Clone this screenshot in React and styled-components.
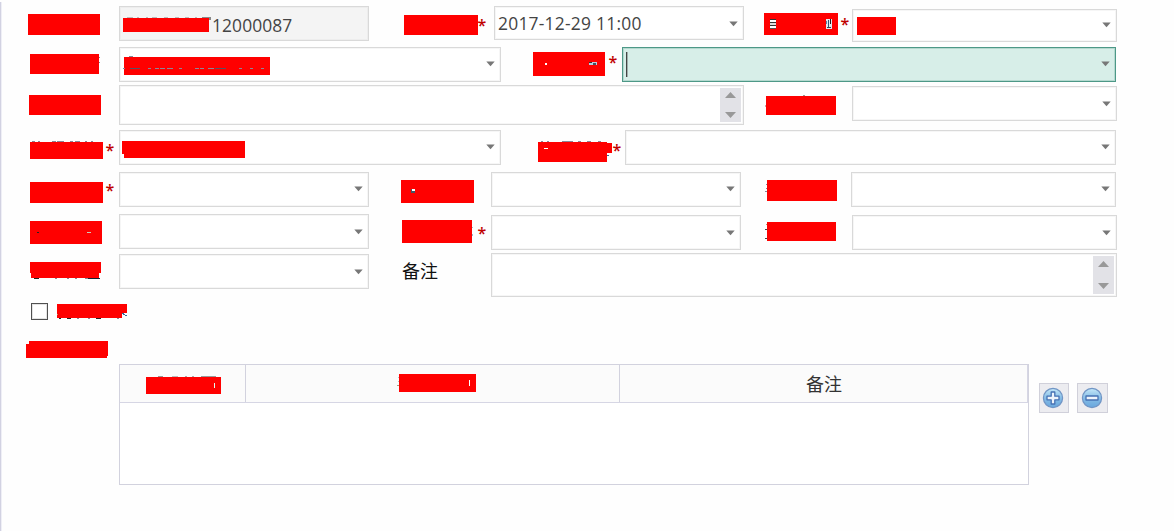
import React from 'react';
import styled, { createGlobalStyle } from 'styled-components';

const GlobalStyle = createGlobalStyle`
  * {
    box-sizing: border-box;
  }
  body {
    margin: 0;
    background: #fefefe;
    overflow: hidden;
  }
`;

const Page = styled.div`
  width: 1174px;
  height: 531px;
  display: flex;
  background: #fefefe;
  font-family: "Open Sans", "Noto Sans CJK SC", sans-serif;
  font-size: 17.4px;
  color: #444;
`;

const Edge = styled.div`
  width: 2px;
  margin-top: 2px;
  background: #d2d2e2;
  border-right: 1px solid #efeff6;
`;

const Form = styled.div`
  flex: 1;
  display: flex;
  flex-direction: column;
  margin-left: -2px;
`;

const Row = styled.div`
  display: flex;
  align-items: flex-start;
  flex: none;
  height: ${p => p.$h}px;
`;

const Cell = styled.div`
  flex: none;
  display: flex;
  margin-left: ${p => p.$gap || 0}px;
  margin-top: ${p => p.$top || 0}px;
`;

const Box = styled(Cell)`
  width: ${p => p.$w}px;
  height: ${p => p.$h}px;
  background: ${p => (p.$readOnly ? '#f4f4f4' : '#fff')};
  border: 1px solid #d9d9d9;
  box-shadow: inset 0 0 0 1px ${p => (p.$readOnly ? '#ededed' : '#f6f6f6')};
  justify-content: space-between;
  align-items: flex-start;

  ${p => p.$focus && `
    background: #d7eee8;
    border-color: #4d9887;
    box-shadow: inset 0 0 0 1px #b4d9cf;
  `}
`;

const Value = styled.div`
  display: flex;
  align-items: flex-start;
  height: 100%;
  padding-left: 3px;
  white-space: nowrap;
`;

const Digits = styled.span`
  margin-left: ${p => p.$left || 0}px;
  margin-top: ${p => p.$top || 0}px;
  line-height: 24px;
  letter-spacing: ${p => p.$spacing || 0}px;
`;

const Caret = styled.div`
  width: 1px;
  height: 25px;
  margin-top: 4px;
  background: #444;
  box-shadow: 1px 0 0 #9fb0ab;
`;

const Star = styled.span`
  width: 8px;
  height: 12px;
  margin-left: ${p => p.$gap || 0}px;
  margin-top: ${p => p.$top || 0}px;
  font-size: 16px;
  font-weight: 600;
  line-height: 18px;
  text-indent: -0.5px;
  color: #c00000;
`;

const Label = styled.div`
  margin-left: ${p => p.$gap || 0}px;
  margin-top: ${p => p.$top || 0}px;
  font-family: "Noto Sans CJK SC", sans-serif;
  font-size: 18px;
  line-height: 24px;
  color: ${p => p.$color || '#111'};
`;

const MaskSvg = styled.svg`
  display: block;
  flex: none;
  overflow: visible;
  margin-left: ${p => p.$gap || 0}px;
  margin-top: ${p => p.$top || 0}px;
`;

const ArrowSvg = styled.svg`
  display: block;
  flex: none;
  margin-top: ${p => p.$top}px;
  margin-right: ${p => p.$right}px;
`;

const Scroll = styled.div`
  width: 21px;
  align-self: stretch;
  margin: 2px 2px 2px 0;
  padding: ${p => p.$pad}px 0;
  display: flex;
  flex-direction: column;
  align-items: center;
  justify-content: space-between;
  background: #e2e2e7;
`;

const Checkbox = styled.div`
  width: 17px;
  height: 17px;
  margin: 5px 0 0 31px;
  background: #fff;
  border: 1px solid #505050;
  box-shadow: inset 0 0 0 1px #e4e4e4;
`;

const Table = styled.div`
  width: 910px;
  height: 121px;
  margin-left: 119px;
  border: 1px solid #d2d2de;
  background: #fff;
`;

const Head = styled.div`
  display: flex;
  height: 38px;
  background: #fbfbfb;
  border-bottom: 1px solid #d6d6e4;
`;

const HeadCell = styled.div`
  display: flex;
  align-items: flex-start;
  flex: ${p => (p.$w ? `0 0 ${p.$w}px` : 1)};
  border-right: 1px solid #d2d2de;

  &:last-child {
    border-right-color: #d6d6e4;
  }
`;

const IconButton = styled.button`
  width: ${p => p.$w || 30}px;
  height: 30px;
  margin: 19px 0 0 ${p => p.$gap}px;
  padding: 0 2px 0 0;
  display: flex;
  align-items: center;
  justify-content: center;
  background: #ececf0;
  border: 1px solid #d0d0da;
`;

// w/h is the solid block, d replaces it when the outline is uneven
function Mask({ w, h, gap, top, d, children }) {
  return (
    <MaskSvg width={w} height={h} $gap={gap} $top={top} shapeRendering="crispEdges">
      <path d={d || `M0 0H${w}V${h}H0Z`} fill="#f00" />
      {children}
    </MaskSvg>
  );
}

// [x, y, w, h, color]
function Specks({ items }) {
  return items.map(([x, y, w, h, c], i) => (
    <rect key={i} x={x} y={y} width={w} height={h} fill={c || '#889'} />
  ));
}

function Arrow({ top = 13, right = 5 }) {
  return (
    <ArrowSvg width="9" height="6" $top={top} $right={right}>
      <path d="M0.3 0.5H8.7L4.5 5.3Z" fill="#777" />
    </ArrowSvg>
  );
}

function Select({ w, h = 35, gap, top, arrow, right, focus, children }) {
  return (
    <Box $w={w} $h={h} $gap={gap} $top={top} $focus={focus}>
      <Value>{children}</Value>
      <Arrow top={arrow} right={right} />
    </Box>
  );
}

function TextArea({ w, h, gap, top, pad = 4 }) {
  return (
    <Box $w={w} $h={h} $gap={gap} $top={top}>
      <Value />
      <Scroll $pad={pad}>
        <svg width="11" height="6"><path d="M0 6L5.5 0L11 6Z" fill="#999" /></svg>
        <svg width="11" height="6"><path d="M0 0H11L5.5 6Z" fill="#999" /></svg>
      </Scroll>
    </Box>
  );
}

function RoundIcon({ minus }) {
  const id = minus ? 'minusFill' : 'plusFill';
  return (
    <svg width="22" height="22" viewBox="0 0 22 22">
      <defs>
        <linearGradient id={id} x1="0" y1="0" x2="0" y2="1">
          <stop offset="0" stopColor="#c4e8f8" />
          <stop offset="0.5" stopColor="#86bde6" />
          <stop offset="1" stopColor="#67a6dd" />
        </linearGradient>
      </defs>
      <circle cx="11" cy="11" r="9.6" fill={`url(#${id})`} stroke="#7195c5" strokeWidth="1.2" />
      <path
        d={minus
          ? 'M5 9H17V13H5Z'
          : 'M9.2 5H12.8V9.2H17V12.8H12.8V17H9.2V12.8H5V9.2H9.2Z'}
        fill="#eef4fb"
        stroke="#4672b4"
        strokeWidth="1.3"
        strokeLinejoin="round"
      />
    </svg>
  );
}

function App() {
  return (
    <Page>
      <GlobalStyle />
      <Edge />
      <Form>
        <Row $h={44}>
          <Mask w={72} h={21} gap={28} top={14} />
          <Box $w={250} $h={35} $gap={19} $top={6} $readOnly>
            <Value>
              <Mask w={86} h={14} top={11}>
                <Specks items={[[4, -1, 6, 1, '#bbb'], [14, -1, 2, 1, '#bbb'], [23, -1, 2, 1, '#bbb'], [29, -1, 5, 1, '#bbb'], [41, -1, 4, 1, '#bbb'], [52, -1, 4, 1, '#bbb'], [62, -1, 4, 1, '#bbb'], [72, -1, 2, 1, '#bbb'], [79, -1, 9, 1, '#888'], [86, 0, 2, 2, '#888']]} />
              </Mask>
              <Digits $left={3} $top={6} $spacing={0.1}>12000087</Digits>
            </Value>
          </Box>
          <Mask w={74} h={20} gap={35} top={15} />
          <Star $top={16}>*</Star>
          <Select w={250} h={34} gap={8} top={6} arrow={14}>
            <Digits $top={4} $spacing={0.25}>2017-12-29 11:00</Digits>
          </Select>
          <Mask w={74} h={22} gap={20} top={13}>
            <Specks items={[[6, 6, 6, 1, '#333'], [6, 7, 6, 2, '#fff'], [6, 9, 6, 1, '#333'], [6, 10, 6, 2, '#ddd'], [6, 12, 6, 1, '#333'], [6, 13, 6, 2, '#fff'], [6, 15, 6, 1, '#555'], [62, 6, 6, 10, '#dfe8ee'], [62, 8, 1, 3, '#58a'], [64, 7, 1, 7, '#357'], [66, 6, 1, 5, '#222'], [63, 14, 4, 1, '#345']]} />
          </Mask>
          <Star $gap={3} $top={15}>*</Star>
          <Select w={265} h={33} gap={3} top={9} arrow={12}>
            <Mask w={39} h={18} gap={1} top={7} />
          </Select>
        </Row>

        <Row $h={41}>
          <Mask w={69} h={20} gap={30} top={10}>
            <Specks items={[[69, 3, 1, 1], [69, 8, 1, 1]]} />
          </Mask>
          <Select w={382} gap={20} top={3}>
            <Mask w={146} h={18} gap={1} top={9}>
              <Specks items={[[5, -1, 4, 1], [-1, 11, 2, 1], [6, 11, 10, 1, '#556'], [24, 11, 3, 1], [31, 11, 4, 1], [36, 11, 5, 1], [43, 11, 6, 1], [55, 11, 3, 1], [71, 11, 4, 1], [76, 11, 4, 1], [84, 11, 6, 1], [91, 11, 11, 1, '#556'], [115, 11, 3, 1], [126, 11, 3, 1], [137, 11, 3, 1]]} />
            </Mask>
          </Select>
          <Mask w={72} h={24} gap={32} top={8}>
            <Specks items={[[12, 11, 2, 2, '#fff'], [56, 10, 8, 3, '#bcd'], [56, 10, 3, 1, '#333'], [60, 11, 3, 2, '#456']]} />
          </Mask>
          <Star $gap={4} $top={9}>*</Star>
          <Select w={494} gap={5} top={3} focus>
            <Caret />
          </Select>
        </Row>

        <Row $h={42}>
          <Mask w={72} h={20} gap={29} top={10} />
          <TextArea w={625} h={40} gap={18} />
          <Mask w={70} h={19} gap={22} top={11}>
            <Specks items={[[-1, 9, 1, 2, '#caa'], [37, -1, 2, 1, '#999']]} />
          </Mask>
          <Select w={265} gap={16} top={1} arrow={14} />
        </Row>

        <Row $h={42}>
          <Mask w={73} h={17} gap={30} top={15}>
            <Specks items={[[2, -1, 3, 1], [8, -1, 2, 1], [22, -1, 4, 1], [27, -1, 7, 1], [40, -1, 3, 1], [45, -1, 5, 1], [55, -1, 2, 1], [61, -1, 2, 1]]} />
          </Mask>
          <Star $gap={3} $top={14}>*</Star>
          <Select w={382} gap={5} top={3}>
            <Mask w={123} h={17} gap={-1} top={10} d="M0 0H123V17H2V13H0Z" />
          </Select>
          <Mask w={74} h={20} gap={37} top={15} d="M0 0H69V1H74V11H69V20H0Z">
            <Specks items={[[3, -1, 2, 1], [9, -1, 2, 1], [24, -1, 11, 1], [40, -1, 3, 1], [49, -1, 4, 1], [60, -1, 3, 1], [6, 6, 4, 1, '#fff'], [69, 13, 2, 1, '#369']]} />
          </Mask>
          <Star $gap={1} $top={14}>*</Star>
          <Select w={491} gap={4} top={3} />
        </Row>

        <Row $h={43}>
          <Mask w={73} h={21} gap={30} top={13} />
          <Star $gap={3} $top={12}>*</Star>
          <Select w={250} gap={5} top={3} arrow={13} />
          <Mask w={73} h={23} gap={32} top={11}>
            <Specks items={[[10, 9, 4, 4, '#456'], [11, 9, 3, 2, '#fff']]} />
          </Mask>
          <Select w={250} gap={17} top={3} />
          <Mask w={70} h={21} gap={26} top={11}>
            <Specks items={[[-1, 4, 1, 1], [-1, 8, 1, 1], [-2, 11, 2, 1]]} />
          </Mask>
          <Select w={265} gap={14} top={3} />
        </Row>

        <Row $h={41}>
          <Mask w={72} h={23} gap={30} top={9}>
            <Specks items={[[7, 11, 2, 1, '#222'], [57, 11, 4, 1, '#ccb']]} />
          </Mask>
          <Select w={250} gap={17} top={2} arrow={14} />
          <Mask w={70} h={23} gap={33} top={8}>
            <Specks items={[[70, 7, 1, 1, '#9bc'], [70, 14, 1, 2, '#9bc']]} />
          </Mask>
          <Star $gap={6} $top={12}>*</Star>
          <Select w={250} gap={5} top={3} arrow={14} />
          <Mask w={69} h={19} gap={26} top={10}>
            <Specks items={[[-1, 2, 1, 1, '#b96'], [-2, 7, 2, 1, '#444'], [-2, 16, 2, 1, '#444']]} />
          </Mask>
          <Select w={265} gap={16} top={3} arrow={14} />
        </Row>

        <Row $h={45}>
          <Mask w={71} h={16} gap={30} top={9} d="M0 0H71V11H69V16H1V11H0Z">
            <Specks items={[[4, 16, 5, 1, '#222'], [25, 16, 2, 1], [37, 16, 2, 1], [45, 16, 2, 1], [55, 16, 3, 1], [58, 16, 12, 1, '#123']]} />
          </Mask>
          <Select w={250} gap={18} top={1} arrow={14} />
          <Label $gap={33} $top={5}>备注</Label>
          <TextArea w={626} h={44} gap={53} pad={5} />
        </Row>

        <Row $h={30}>
          <Checkbox />
          <Mask w={70} h={14} gap={9} top={6} d="M0 0H70V9H65V14H0Z">
            <Specks items={[[0, 10, 1, 1, '#b96'], [2, 14, 2, 1, '#222'], [10, 14, 4, 1, '#222'], [20, 14, 2, 1], [31, 14, 2, 1], [39, 14, 5, 1, '#222'], [60, 14, 2, 1], [65, 9, 2, 1, '#369'], [66, 10, 2, 1, '#369'], [68, 11, 2, 1, '#369']]} />
          </Mask>
        </Row>

        <Row $h={36}>
          <Mask w={82} h={17} gap={26} top={13} d="M3 0H82V15H81V17H0V3H3Z" />
        </Row>

        <Row $h={150}>
          <Table>
            <Head>
              <HeadCell $w={126}>
                <Mask w={75} h={17} gap={26} top={12}>
                  <Specks items={[[12, -1, 5, 1, '#999'], [26, -1, 6, 1, '#bbb'], [39, -1, 2, 1, '#aaa'], [46, -1, 2, 1, '#aaa'], [55, -1, 15, 1, '#999'], [68, 6, 1, 5, '#dfe']]} />
                </Mask>
              </HeadCell>
              <HeadCell $w={374}>
                <Mask w={77} h={18} gap={153} top={9}>
                  <Specks items={[[-1, 3, 1, 1, '#bbb'], [-1, 7, 1, 1, '#bbb'], [-2, 11, 2, 1, '#a97'], [70, 6, 1, 6, '#fff']]} />
                </Mask>
              </HeadCell>
              <HeadCell>
                <Label $gap={186} $top={6} $color="#333">备注</Label>
              </HeadCell>
            </Head>
          </Table>
          <IconButton $gap={10}><RoundIcon /></IconButton>
          <IconButton $gap={8} $w={31}><RoundIcon minus /></IconButton>
        </Row>
      </Form>
    </Page>
  );
}

export default App;
